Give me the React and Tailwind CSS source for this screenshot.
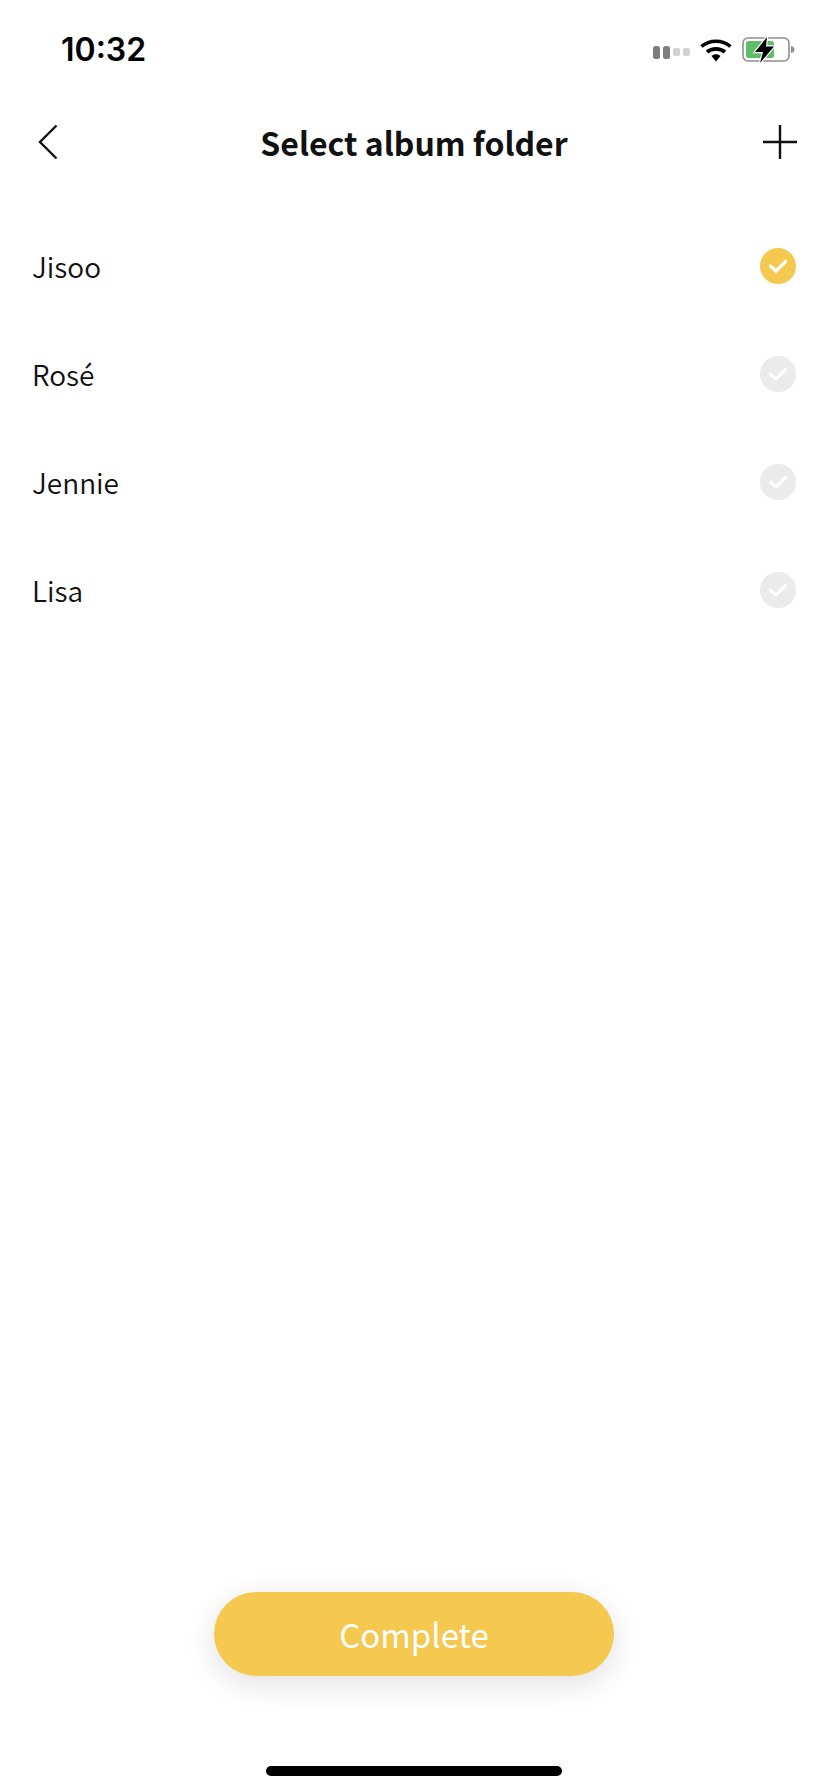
import React from "react";

const folders = [
  { name: "Jisoo", selected: true },
  { name: "Rosé", selected: false },
  { name: "Jennie", selected: false },
  { name: "Lisa", selected: false },
];

const StatusIcons = () => (
  <div className="flex items-center">
    {/* signal dots */}
    <div className="flex items-center gap-[3px] mr-[10px] mt-[4px]">
      <span className="w-[7px] h-[13px] rounded-[2.5px] bg-[#7d7d7d]" />
      <span className="w-[7px] h-[13px] rounded-[2.5px] bg-[#7d7d7d]" />
      <span className="w-[7px] h-[8px] rounded-[2px] bg-[#d2d2d2]" />
      <span className="w-[7px] h-[8px] rounded-[2px] bg-[#d2d2d2]" />
    </div>
    {/* wifi */}
    <svg width="32" height="24" viewBox="0 0 32 24" className="mr-[10px]">
      <path d="M1.5 8.5 C9.5 1.5 22.5 1.5 30.5 8.5" fill="none" stroke="#000" strokeWidth="3.6" />
      <path d="M7 14 C12 9.8 20 9.8 25 14" fill="none" stroke="#000" strokeWidth="3.6" />
      <path d="M11.5 18 L16 23.5 L20.5 18 C18 15.8 14 15.8 11.5 18 Z" fill="#000" />
    </svg>
    {/* battery, charging */}
    <svg width="54" height="26" viewBox="0 0 54 26">
      <rect x="1" y="1" width="46" height="23" rx="5" fill="none" stroke="#8f8f8f" strokeWidth="1.6" />
      <rect x="4" y="4" width="28" height="17" rx="2.5" fill="#5fbd68" />
      <path d="M49 9 C51.5 9.5 52.5 11 52.5 12.5 C52.5 14 51.5 15.5 49 16 Z" fill="#8f8f8f" />
      <path d="M25 0 L13 15 L21 15 L18 26 L32 9.5 L24 9.5 Z" fill="#fff" stroke="#fff" strokeWidth="2.4" />
      <path d="M25 0 L13 15 L21 15 L18 26 L32 9.5 L24 9.5 Z" fill="#000" />
    </svg>
  </div>
);

const CheckBadge = ({ on }) => (
  <span
    className={`w-[36px] h-[36px] rounded-full flex items-center justify-center ${
      on ? "bg-[#f5c84f]" : "bg-[#ebebeb]"
    }`}
  >
    <svg width="20" height="16" viewBox="0 0 20 16" fill="none">
      <path d="M2.5 8 L8 13 L17.5 3.5" stroke="#fff" strokeWidth="3.2" strokeLinecap="round" strokeLinejoin="round" />
    </svg>
  </span>
);

const App = () => {
  return (
    <div className="w-[828px] h-[1792px] bg-white flex flex-col font-['Noto_Sans_CJK_SC','Noto_Sans',sans-serif] text-[#111]">
      {/* status bar */}
      <div className="h-[88px] shrink-0 flex items-center justify-between pl-[61px] pr-[32px] pt-[12px]">
        <span className="font-['Inter',sans-serif] text-[32px] font-semibold text-black leading-none">10:32</span>
        <StatusIcons />
      </div>

      {/* nav bar */}
      <div className="h-[108px] shrink-0 flex items-center px-[30px]">
        <div className="w-[60px] pl-[8px]">
          <svg width="20" height="36" viewBox="0 0 20 36" fill="none" className="block">
            <path d="M18.5 1.5 L2 18 L18.5 34.5" stroke="#111" strokeWidth="2.4" />
          </svg>
        </div>
        <h1 className="flex-1 text-center text-[32px] font-bold leading-none">Select album folder</h1>
        <div className="w-[60px] flex justify-end">
          <svg width="36" height="36" viewBox="0 0 36 36" fill="none" className="block">
            <path d="M18 1 V35 M1 18 H35" stroke="#111" strokeWidth="2.4" />
          </svg>
        </div>
      </div>

      {/* folders */}
      <ul className="mt-[16px] px-[32px] flex flex-col">
        {folders.map((f) => (
          <li key={f.name} className="h-[108px] flex items-center justify-between">
            <span className="text-[28px] font-[350] leading-none">{f.name}</span>
            <CheckBadge on={f.selected} />
          </li>
        ))}
      </ul>

      {/* bottom action */}
      <div className="mt-auto flex flex-col items-center">
        <button className="w-[400px] h-[84px] rounded-full bg-[#f5c84f] text-white text-[33px] leading-none shadow-[0_8px_32px_rgba(0,0,0,0.12)]">
          Complete
        </button>
        <div className="w-[296px] h-[10px] rounded-full bg-black mt-[90px] mb-[16px]" />
      </div>
    </div>
  );
};

export default App;
